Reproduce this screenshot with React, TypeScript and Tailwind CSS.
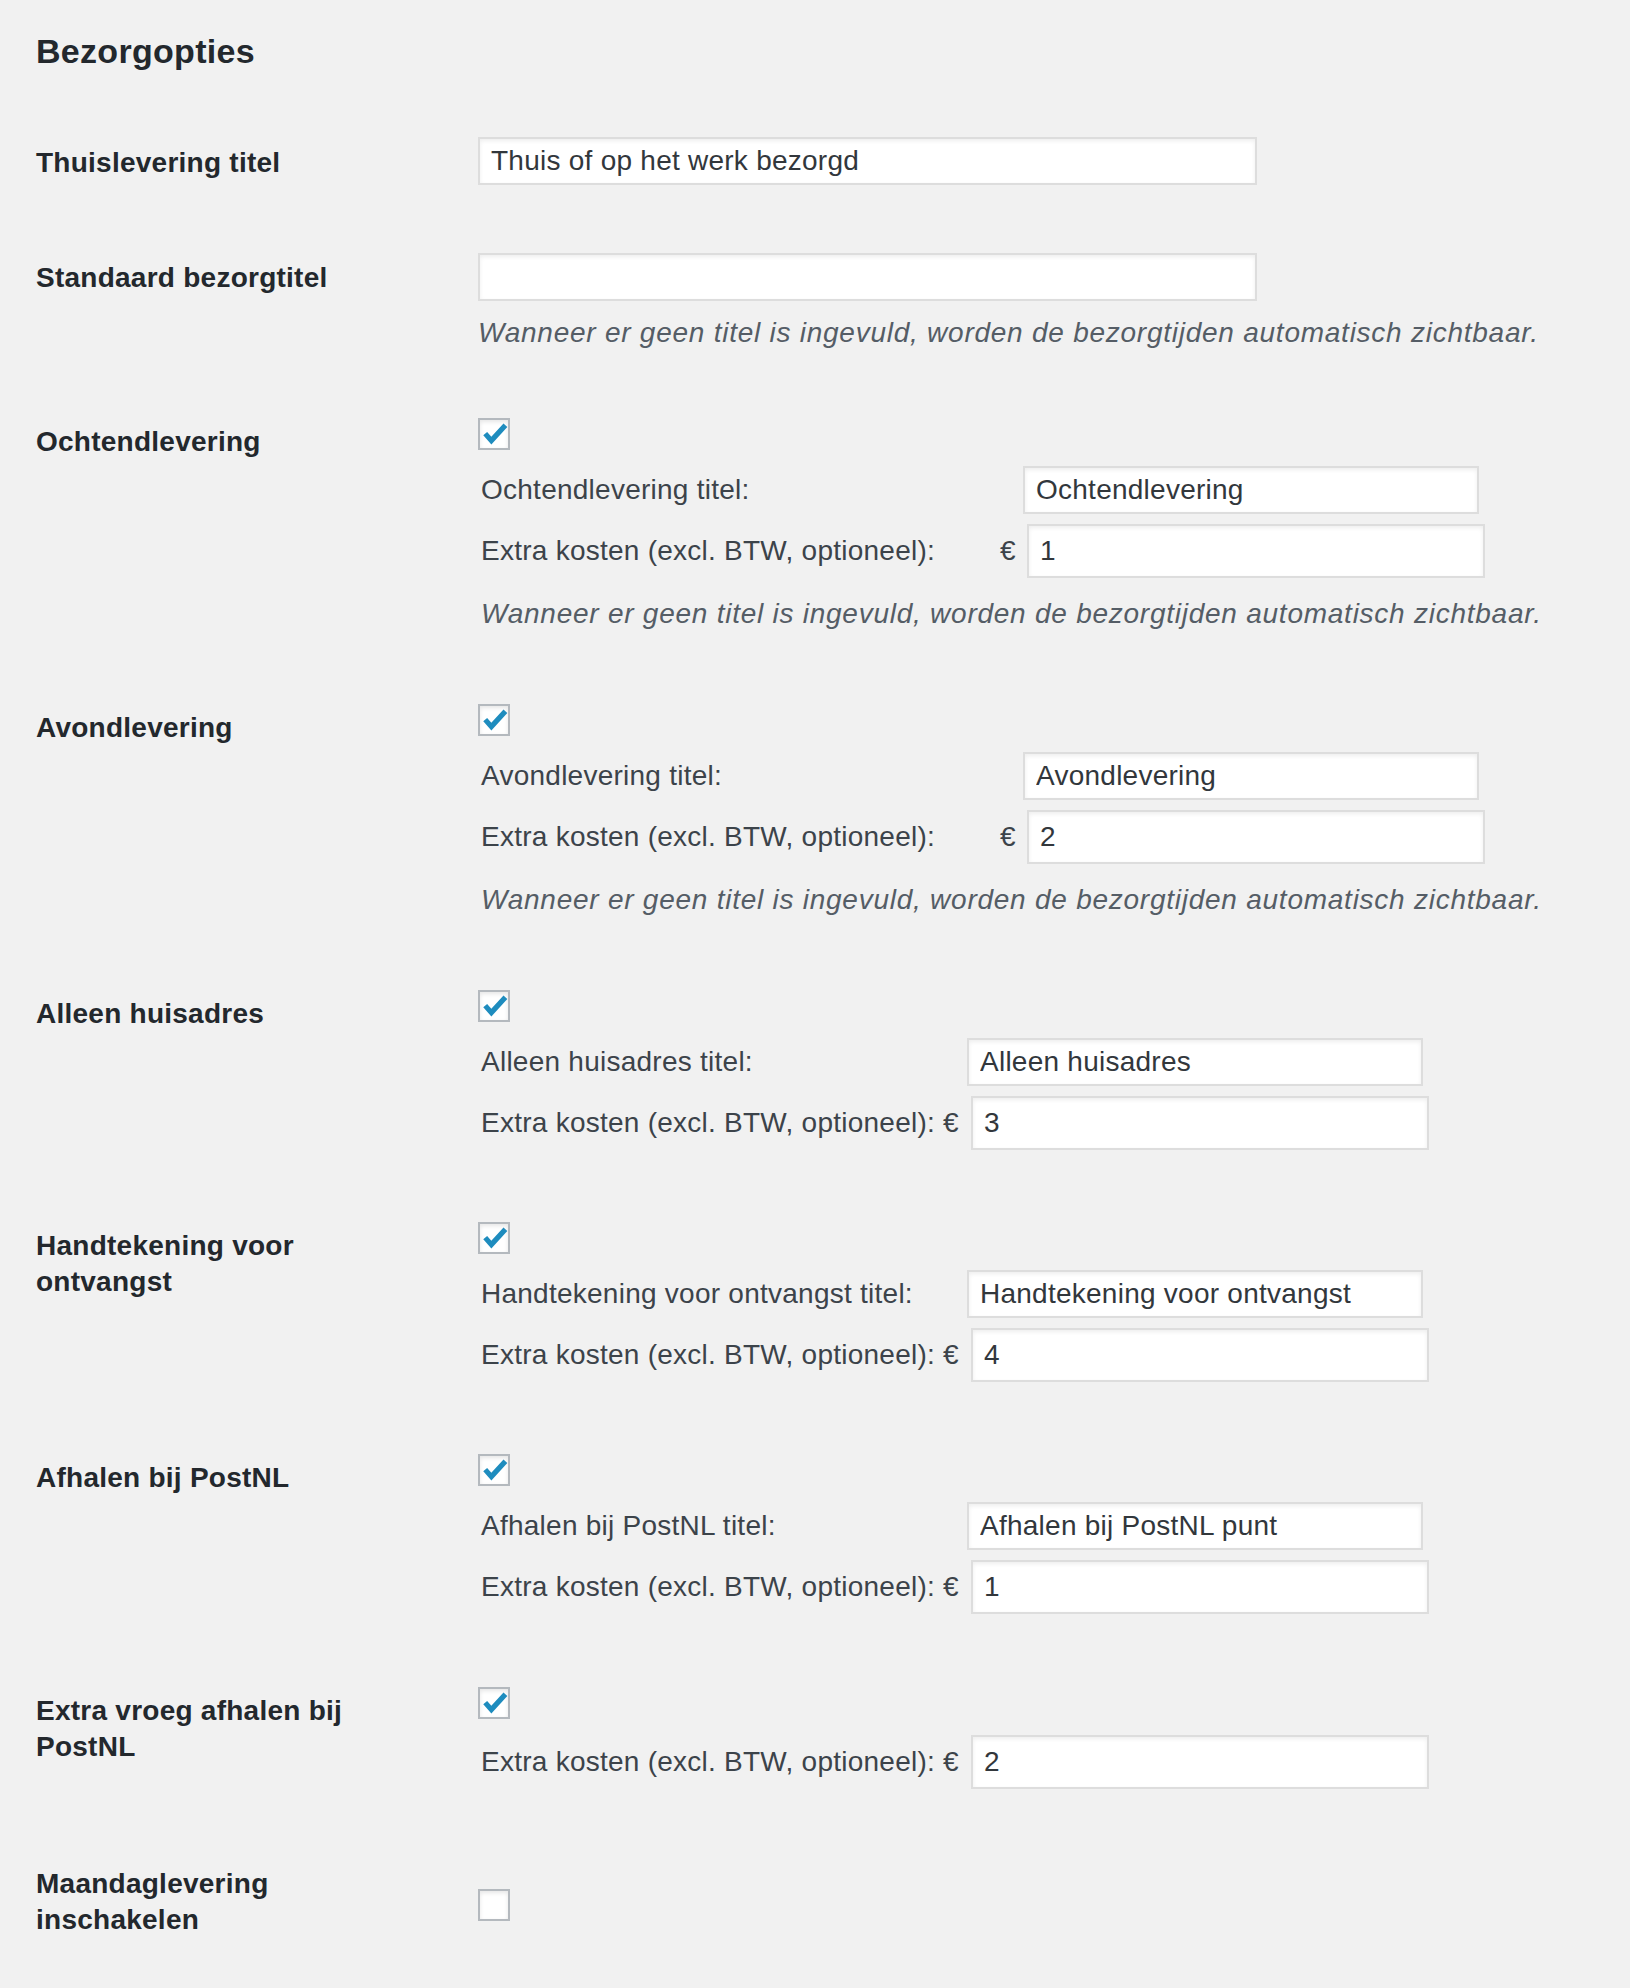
import React from "react";

const DESC = "Wanneer er geen titel is ingevuld, worden de bezorgtijden automatisch zichtbaar.";
const COST_LABEL = "Extra kosten (excl. BTW, optioneel):";

type Group = {
  label: string;
  titleLabel?: string;
  titleValue?: string;
  cost: string;
  desc?: boolean;
  wide?: boolean;
  mt: string;
};

const groups: Group[] = [
  { label: "Ochtendlevering", titleLabel: "Ochtendlevering titel:", titleValue: "Ochtendlevering", cost: "1", desc: true, wide: true, mt: "mt-[67px]" },
  { label: "Avondlevering", titleLabel: "Avondlevering titel:", titleValue: "Avondlevering", cost: "2", desc: true, wide: true, mt: "mt-[72px]" },
  { label: "Alleen huisadres", titleLabel: "Alleen huisadres titel:", titleValue: "Alleen huisadres", cost: "3", mt: "mt-[72px]" },
  { label: "Handtekening voor ontvangst", titleLabel: "Handtekening voor ontvangst titel:", titleValue: "Handtekening voor ontvangst", cost: "4", mt: "mt-[72px]" },
  { label: "Afhalen bij PostNL", titleLabel: "Afhalen bij PostNL titel:", titleValue: "Afhalen bij PostNL punt", cost: "1", mt: "mt-[72px]" },
  { label: "Extra vroeg afhalen bij PostNL", cost: "2", mt: "mt-[73px]" },
];

const inputCls =
  "block border-2 border-[#dddddd] bg-white shadow-[inset_0_2px_4px_rgba(0,0,0,0.07)] pl-[11px] text-[28px] text-[#32373c] tracking-[0.25px] outline-none";

function Checkbox({ checked, className = "" }: { checked: boolean; className?: string }) {
  return (
    <span
      className={`relative block w-[32px] h-[32px] border-2 border-[#b4b9be] bg-white shadow-[inset_0_2px_4px_rgba(0,0,0,0.1)] ${className}`}
    >
      {checked && (
        <svg viewBox="0 0 32 32" className="absolute left-[-2px] top-[-2px] w-[32px] h-[32px]">
          <path d="M7.2 15.6 L13.4 22.6 L27.4 7.2" fill="none" stroke="#1e8cbe" strokeWidth={5.2} strokeLinejoin="miter" />
        </svg>
      )}
    </span>
  );
}

function Th({ children, pt }: { children: React.ReactNode; pt: string }) {
  return (
    <div className={`w-[380px] mr-[62px] shrink-0 ${pt} text-[28px] leading-[36px] font-bold text-[#23282d] tracking-[0.25px]`}>
      {children}
    </div>
  );
}

function GroupRow({ g }: { g: Group }) {
  const labelW = g.wide ? "w-[522px]" : "w-[465px]";
  return (
    <div className={`flex items-start ${g.mt}`}>
      <Th pt="pt-[6px]">{g.label}</Th>
      <div className="flex flex-col">
        <Checkbox checked />
        {g.titleLabel && (
          <div className="flex items-center mt-[16px]">
            <div className={`${labelW} shrink-0 pl-[3px] text-[28px] leading-[36px] text-[#3c434a] tracking-[0.25px] whitespace-nowrap`}>
              {g.titleLabel}
            </div>
            <input
              readOnly
              value={g.titleValue}
              className={`${inputCls} ${g.wide ? "ml-[23px]" : "ml-[24px]"} w-[456px] h-[48px]`}
            />
          </div>
        )}
        <div className={`flex items-center ${g.titleLabel ? "mt-[10px]" : "mt-[16px]"}`}>
          <div className={`${labelW} shrink-0 pl-[3px] text-[28px] leading-[36px] text-[#3c434a] tracking-[0.25px] whitespace-nowrap`}>
            {COST_LABEL}
          </div>
          <span className={`${g.wide ? "w-[27px]" : "w-[28px]"} shrink-0 text-[28px] leading-[36px] text-[#3c434a]`}>€</span>
          <input readOnly value={g.cost} className={`${inputCls} w-[458px] h-[54px]`} />
        </div>
        {g.desc && (
          <p className="mt-[18px] pl-[3px] text-[28px] leading-[36px] italic text-[#555d66] tracking-[0.75px] whitespace-nowrap">
            {DESC}
          </p>
        )}
      </div>
    </div>
  );
}

export default function App() {
  return (
    <div className="min-h-[1988px] bg-[#f1f1f1] pl-[36px] pt-[29px] font-['Liberation_Sans',Arial,sans-serif]">
      <h2 className="text-[34px] leading-[44px] font-bold text-[#23282d] tracking-[0.3px]">Bezorgopties</h2>

      <div className="flex items-start mt-[64px]">
        <Th pt="pt-[8px]">Thuislevering titel</Th>
        <input readOnly value="Thuis of op het werk bezorgd" className={`${inputCls} w-[779px] h-[48px]`} />
      </div>

      <div className="flex items-start mt-[68px]">
        <Th pt="pt-[7px]">Standaard bezorgtitel</Th>
        <div className="flex flex-col">
          <input readOnly value="" className={`${inputCls} w-[779px] h-[48px]`} />
          <p className="mt-[14px] text-[28px] leading-[36px] italic text-[#555d66] tracking-[0.75px] whitespace-nowrap">
            {DESC}
          </p>
        </div>
      </div>

      {groups.map((g) => (
        <GroupRow key={g.label} g={g} />
      ))}

      <div className="flex items-start mt-[71px]">
        <Th pt="pt-[6px]">Maandaglevering inschakelen</Th>
        <Checkbox checked={false} className="mt-[29px]" />
      </div>
    </div>
  );
}
